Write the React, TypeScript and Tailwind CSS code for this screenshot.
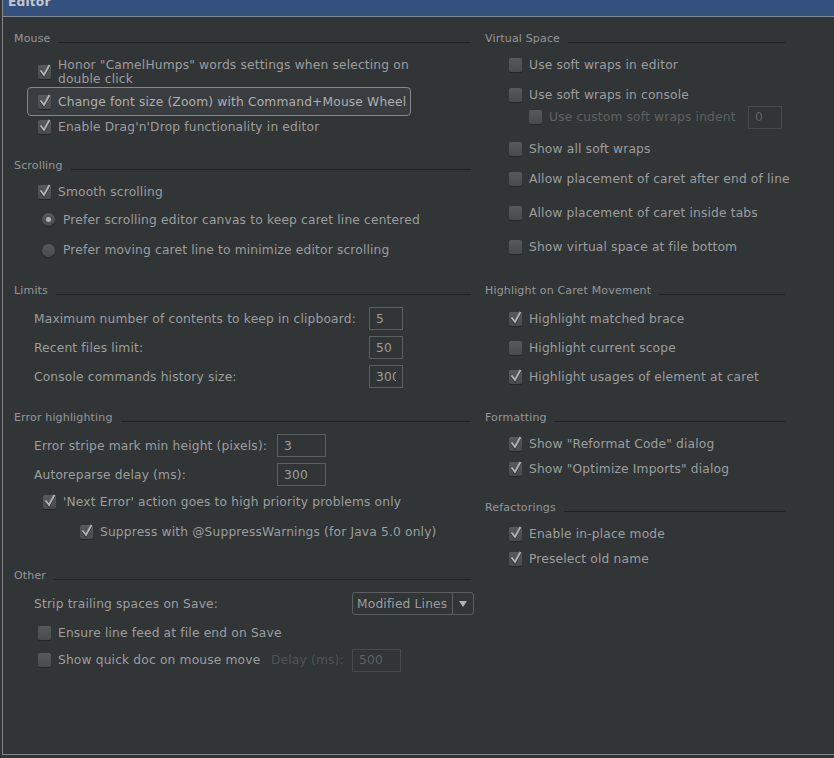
const Box = ({ checked, disabled }: { checked?: boolean; disabled?: boolean }) => (
  <span className="relative mr-[7px] h-[14px] w-[13px] shrink-0 rounded-[2px] bg-gradient-to-b from-[#58595a] to-[#484a4b] shadow-[0_1px_0_#232526]">
    {checked && (
      <svg className="absolute -top-[3px] left-0 h-[16px] w-[15px]" viewBox="0 0 15 16" fill="none">
        <path d="M2.5 8.5 L6 13 L11.5 3" stroke="#1f2122" strokeWidth="2.2" transform="translate(0 .8)" />
        <path d="M2.5 8.5 L6 13 L11.5 3" stroke={disabled ? '#777' : '#b0b2b3'} strokeWidth="2" />
      </svg>
    )}
  </span>
)

const Radio = ({ checked }: { checked?: boolean }) => (
  <span className="mr-[8px] flex h-[13px] w-[13px] shrink-0 items-center justify-center rounded-full bg-gradient-to-b from-[#58595a] to-[#484a4b] shadow-[0_1px_1px_#232526]">
    {checked && <span className="h-[5px] w-[5px] rounded-full bg-[#b0b2b3]" />}
  </span>
)

const Section = ({ title, className, children }: { title: string; className?: string; children: React.ReactNode }) => (
  <section className={className}>
    <div className="flex h-[16px] items-center">
      <span className="text-[11px] leading-none text-[#95979a]">{title}</span>
      <div className="mt-[8px] ml-[8px] h-px flex-1 bg-[#1e2021]" />
    </div>
    {children}
  </section>
)

const Field = ({ value, width, disabled }: { value: string; width: string; disabled?: boolean }) => (
  <div className={`flex h-[23px] shrink-0 items-center overflow-hidden border pl-[6px] ${width} ${disabled ? 'border-[#48494b] text-[#5f6162]' : 'border-[#5c5e60] text-[#9c9e9f]'}`}>
    {value}
  </div>
)

const Check = ({ label, checked, className }: { label: string; checked?: boolean; className: string }) => (
  <div className={`flex items-center ${className}`}>
    <Box checked={checked} />
    <span>{label}</span>
  </div>
)

export default function App() {
  return (
    <div className="h-[758px] w-[834px] overflow-hidden bg-[#313536] pb-[2px] pl-[2px] font-['DejaVu_Sans',sans-serif] text-[12.25px] leading-[14px] tracking-[0.16px] text-[#9c9e9f]">
      <div className="h-[755px] border-b border-l border-[#85878a]">
        <div className="h-[16px] overflow-hidden bg-[#34507c] pl-[5px]">
          <div className="-mt-[5px] font-bold text-[#c3c6cb]">Editor</div>
        </div>
        <div className="flex border-t border-[#85878a] pt-[13px] pl-[11px]">
          <div className="w-[457px]">
            <Section title="Mouse" className="h-[127px]">
              <div className="pt-[10px] pl-[24px]">
                <div className="flex h-[32px] items-center">
                  <Box checked />
                  <span className="w-[360px]">Honor "CamelHumps" words settings when selecting on double click</span>
                </div>
                <div className="-mt-px -ml-[11px] flex h-[29px] w-[384px] items-center rounded-[4px] border border-[#85878a] bg-[#3a3d3f] pl-[10px] text-[#adafb0]">
                  <Box checked />
                  <span>Change font size (Zoom) with Command+Mouse Wheel</span>
                </div>
                <Check checked label="Enable Drag'n'Drop functionality in editor" className="h-[22px]" />
              </div>
            </Section>
            <Section title="Scrolling" className="h-[125px]">
              <div className="pt-[4px] pl-[24px]">
                <Check checked label="Smooth scrolling" className="h-[30px]" />
                <div className="flex h-[25px] items-center pl-[4px]">
                  <Radio checked />
                  <span>Prefer scrolling editor canvas to keep caret line centered</span>
                </div>
                <div className="flex h-[36px] items-center pl-[4px]">
                  <Radio />
                  <span>Prefer moving caret line to minimize editor scrolling</span>
                </div>
              </div>
            </Section>
            <Section title="Limits" className="h-[127px]">
              <div className="pt-[6px] pl-[20px]">
                <div className="flex h-[29px] items-center">
                  <span className="w-[335px]">Maximum number of contents to keep in clipboard:</span>
                  <Field value="5" width="w-[34px]" />
                </div>
                <div className="flex h-[29px] items-center">
                  <span className="w-[335px]">Recent files limit:</span>
                  <Field value="50" width="w-[34px]" />
                </div>
                <div className="flex h-[29px] items-center">
                  <span className="w-[335px]">Console commands history size:</span>
                  <div className="flex h-[23px] w-[34px] items-center border border-[#5c5e60] pl-[6px]">
                    <span className="w-[20px] overflow-hidden">300</span>
                  </div>
                </div>
              </div>
            </Section>
            <Section title="Error highlighting" className="h-[158px]">
              <div className="pt-[6px] pl-[20px]">
                <div className="flex h-[29px] items-center">
                  <span className="w-[243px]">Error stripe mark min height (pixels):</span>
                  <Field value="3" width="w-[49px]" />
                </div>
                <div className="flex h-[29px] items-center">
                  <span className="w-[243px]">Autoreparse delay (ms):</span>
                  <Field value="300" width="w-[49px]" />
                </div>
                <Check checked label="'Next Error' action goes to high priority problems only" className="h-[25px] pl-[9px]" />
                <Check checked label="Suppress with @SuppressWarnings (for Java 5.0 only)" className="h-[36px] pl-[46px]" />
              </div>
            </Section>
            <Section title="Other">
              <div className="pt-[6px]">
                <div className="flex h-[29px] items-center pl-[20px]">
                  <span className="w-[318px] shrink-0">Strip trailing spaces on Save:</span>
                  <div className="flex h-[23px] w-[122px] shrink-0 items-center rounded-[3px] border border-[#5c5e60]">
                    <span className="w-[99px] pl-[4px]">Modified Lines</span>
                    <span className="flex h-full flex-1 items-center justify-center border-l border-[#5c5e60]">
                      <svg className="h-[6px] w-[8px]" viewBox="0 0 8 6"><path d="M0 0h8L4 6z" fill="#b0b2b3" /></svg>
                    </span>
                  </div>
                </div>
                <Check label="Ensure line feed at file end on Save" className="h-[30px] pl-[24px]" />
                <div className="flex h-[24px] items-center pl-[24px]">
                  <Box />
                  <span className="w-[213px]">Show quick doc on mouse move</span>
                  <span className="w-[81px] text-[#505254]">Delay (ms):</span>
                  <Field value="500" width="w-[49px]" disabled />
                </div>
              </div>
            </Section>
          </div>
          <div className="ml-[14px] w-[300px]">
            <Section title="Virtual Space" className="h-[252px]">
              <div className="pt-[9px] pl-[24px]">
                <Check label="Use soft wraps in editor" className="h-[20px]" />
                <Check label="Use soft wraps in console" className="mt-[10px] h-[20px]" />
                <div className="mt-px flex h-[22px] items-center pl-[20px] text-[#5f6162]">
                  <Box />
                  <span className="w-[199px]">Use custom soft wraps indent</span>
                  <Field value="0" width="w-[34px]" disabled />
                </div>
                <Check label="Show all soft wraps" className="mt-[11px] h-[20px]" />
                <Check label="Allow placement of caret after end of line" className="mt-[10px] h-[20px] whitespace-nowrap" />
                <Check label="Allow placement of caret inside tabs" className="mt-[14px] h-[20px]" />
                <Check label="Show virtual space at file bottom" className="mt-[14px] h-[20px]" />
              </div>
            </Section>
            <Section title="Highlight on Caret Movement" className="h-[127px]">
              <div className="pt-[6px] pl-[24px]">
                <Check checked label="Highlight matched brace" className="h-[29px]" />
                <Check label="Highlight current scope" className="h-[29px]" />
                <Check checked label="Highlight usages of element at caret" className="h-[29px]" />
              </div>
            </Section>
            <Section title="Formatting" className="h-[90px]">
              <div className="pt-[6px] pl-[24px]">
                <Check checked label={'Show "Reformat Code" dialog'} className="h-[25px]" />
                <Check checked label={'Show "Optimize Imports" dialog'} className="h-[25px]" />
              </div>
            </Section>
            <Section title="Refactorings">
              <div className="pt-[6px] pl-[24px]">
                <Check checked label="Enable in-place mode" className="h-[25px]" />
                <Check checked label="Preselect old name" className="h-[25px]" />
              </div>
            </Section>
          </div>
        </div>
      </div>
    </div>
  )
}
